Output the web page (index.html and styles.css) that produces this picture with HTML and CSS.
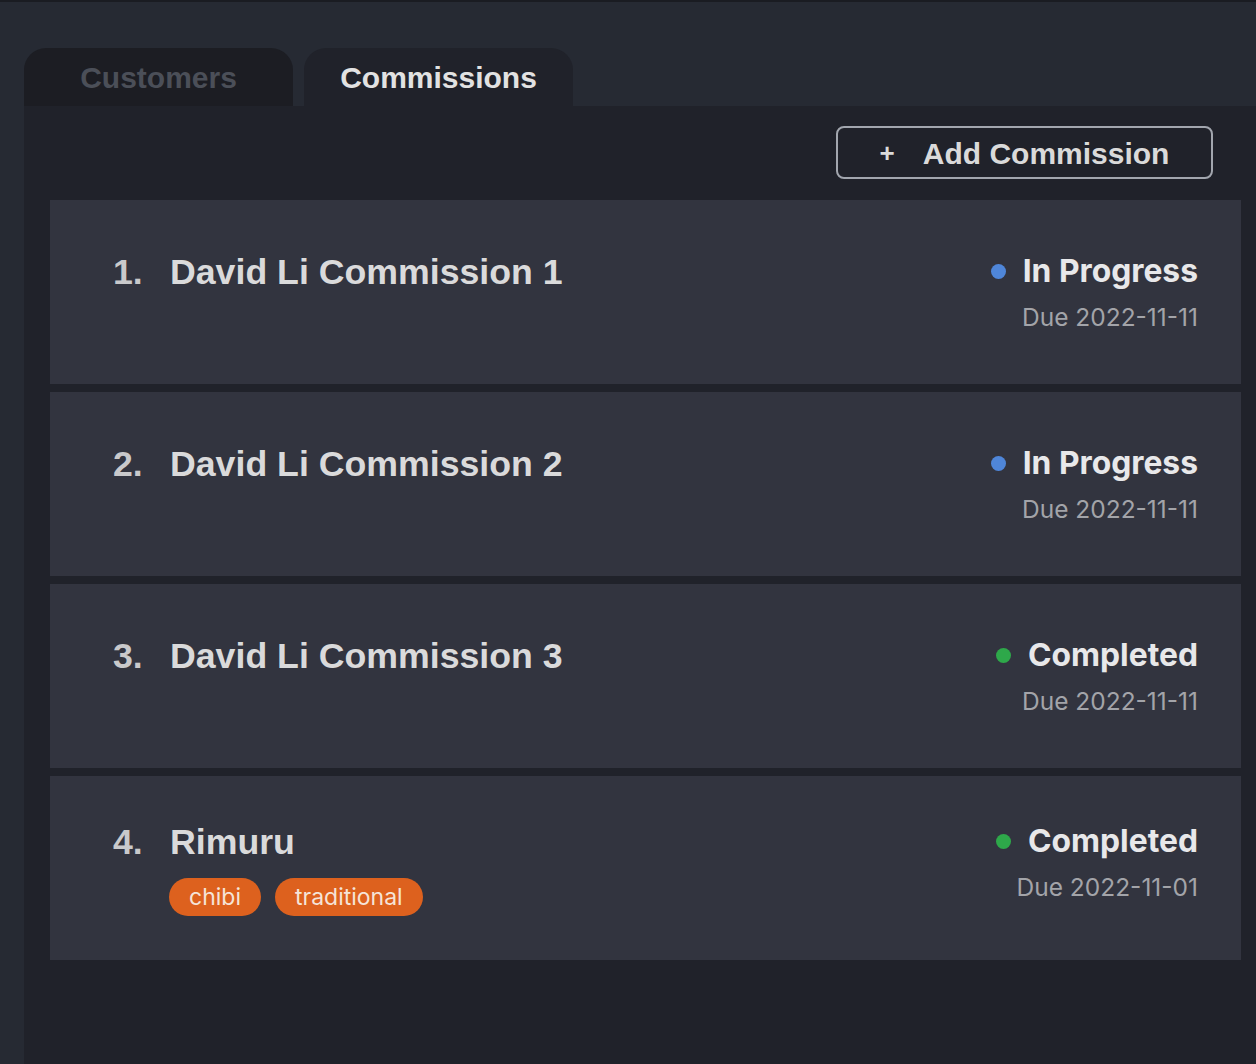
FILE: index.html
```html
<!DOCTYPE html>
<html>
<head>
<meta charset="utf-8">
<link rel="stylesheet" href="styles.css">
</head>
<body>
<div class="app">
  <div class="topbar"></div>
  <div class="tabs">
    <div class="tab tab-inactive">Customers</div>
    <div class="tab tab-active">Commissions</div>
  </div>
  <div class="panel">
    <div class="toolbar">
      <button class="add-btn"><span class="plus">+</span>Add Commission</button>
    </div>
    <div class="list">
      <div class="card">
        <div class="row">
          <div class="left">
            <div class="title-line"><span class="num">1.</span><span class="title">David Li Commission 1</span></div>
          </div>
          <div class="right">
            <div class="status"><span class="dot dot-blue"></span>In Progress</div>
            <div class="due">Due 2022-11-11</div>
          </div>
        </div>
      </div>
      <div class="card">
        <div class="row">
          <div class="left">
            <div class="title-line"><span class="num">2.</span><span class="title">David Li Commission 2</span></div>
          </div>
          <div class="right">
            <div class="status"><span class="dot dot-blue"></span>In Progress</div>
            <div class="due">Due 2022-11-11</div>
          </div>
        </div>
      </div>
      <div class="card">
        <div class="row">
          <div class="left">
            <div class="title-line"><span class="num">3.</span><span class="title">David Li Commission 3</span></div>
          </div>
          <div class="right">
            <div class="status"><span class="dot dot-green"></span>Completed</div>
            <div class="due">Due 2022-11-11</div>
          </div>
        </div>
      </div>
      <div class="card">
        <div class="row">
          <div class="left">
            <div class="title-line"><span class="num">4.</span><span class="title">Rimuru</span></div>
            <div class="tags">
              <span class="tag">chibi</span>
              <span class="tag">traditional</span>
            </div>
          </div>
          <div class="right">
            <div class="status"><span class="dot dot-green"></span>Completed</div>
            <div class="due">Due 2022-11-01</div>
          </div>
        </div>
      </div>
    </div>
  </div>
</div>
</body>
</html>
```
FILE: styles.css
```css
html, body {
  margin: 0;
  padding: 0;
  background: #262a33;
}

.app {
  width: 1256px;
  height: 1064px;
  display: flex;
  flex-direction: column;
  overflow: hidden;
}

.topbar {
  height: 2px;
  background: #1a1c22;
}

.tabs {
  display: flex;
  gap: 11px;
  padding: 46px 0 0 24px;
}

.tab {
  width: 269px;
  height: 58px;
  box-sizing: border-box;
  border-radius: 22px 22px 0 0;
  display: flex;
  align-items: center;
  justify-content: center;
  font-family: "Liberation Sans", Arial, sans-serif;
  font-weight: 700;
  font-size: 30px;
  padding-top: 2px;
}

.tab-inactive {
  background: #1c1d23;
  color: #4b4f58;
}

.tab-active {
  background: #20222a;
  color: #e2e2e2;
}

.panel {
  flex: 1;
  margin-left: 24px;
  background: #20222a;
  padding: 20px 15px 0 26px;
}

.toolbar {
  display: flex;
  justify-content: flex-end;
  padding-right: 28px;
}

.add-btn {
  width: 377px;
  height: 53px;
  box-sizing: border-box;
  border: 2px solid #a2a6ae;
  border-radius: 8px;
  background: transparent;
  color: #dadada;
  font-family: "Liberation Sans", Arial, sans-serif;
  font-weight: 700;
  font-size: 30px;
  display: flex;
  align-items: center;
  justify-content: center;
  padding: 2px 0 0 0;
}

.plus {
  margin-right: 28px;
  font-size: 26px;
}

.list {
  margin-top: 21px;
  display: flex;
  flex-direction: column;
  gap: 8px;
}

.card {
  height: 184px;
  box-sizing: border-box;
  background: #32343f;
  display: flex;
  align-items: center;
  padding: 0 43px 0 63px;
}

.row {
  flex: 1;
  display: flex;
  justify-content: space-between;
  align-items: flex-start;
}

.left {
  display: flex;
  flex-direction: column;
}

.title-line {
  display: flex;
  height: 42px;
  line-height: 44px;
  font-family: "Liberation Sans", Arial, sans-serif;
  font-weight: 700;
  font-size: 35.7px;
}

.num {
  width: 57px;
  color: #c9c9cb;
}

.title {
  color: #dadadb;
}

.tags {
  display: flex;
  gap: 14px;
  margin-top: 16px;
  padding-left: 56px;
}

.tag {
  height: 38px;
  box-sizing: border-box;
  padding: 0 20px;
  border-radius: 19px;
  background: #dd611e;
  color: #f5e4d8;
  font-family: Inter, "Noto Sans", sans-serif;
  font-size: 23px;
  line-height: 38px;
}

.right {
  display: flex;
  flex-direction: column;
  align-items: flex-end;
}

.status {
  display: flex;
  align-items: center;
  gap: 17px;
  height: 42px;
  line-height: 42px;
  font-family: Inter, "Noto Sans", sans-serif;
  font-weight: 700;
  font-size: 31.8px;
  color: #e8e8ea;
}

.dot {
  width: 15px;
  height: 15px;
  border-radius: 50%;
}

.dot-blue {
  background: #4f86d9;
}

.dot-green {
  background: #2ea84a;
}

.due {
  height: 52px;
  line-height: 50px;
  margin-bottom: -10px;
  font-family: Inter, "Noto Sans", sans-serif;
  font-size: 24.5px;
  color: #a3a4a9;
}
```
